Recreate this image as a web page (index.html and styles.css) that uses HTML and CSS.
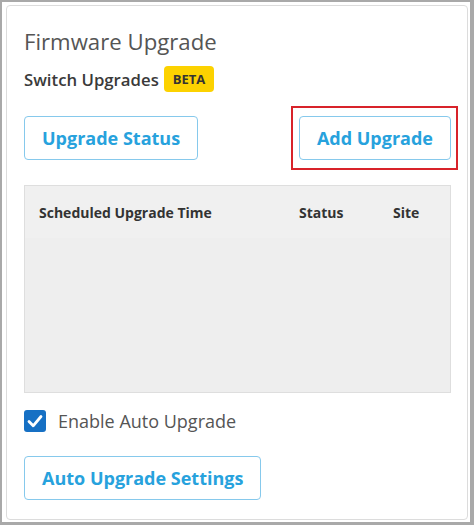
FILE: index.html
```html
<!DOCTYPE html>
<html lang="en">
<head>
<meta charset="utf-8">
<title>Firmware Upgrade</title>
<link rel="stylesheet" href="styles.css">
</head>
<body>
<div class="frame">
  <section class="card">
    <h1 class="title">Firmware Upgrade</h1>
    <div class="subtitle">
      <span class="subtitle-text">Switch Upgrades</span>
      <span class="badge">BETA</span>
    </div>
    <div class="actions">
      <button class="btn">Upgrade Status</button>
      <span class="highlight"><button class="btn">Add Upgrade</button></span>
    </div>
    <div class="table">
      <div class="table-head">
        <span>Scheduled Upgrade Time</span>
        <span>Status</span>
        <span>Site</span>
      </div>
      <div class="table-body"></div>
    </div>
    <label class="check-row">
      <span class="checkbox">
        <svg viewBox="0 0 22 22" width="22" height="22"><path d="M5 11.5 L9.2 15.8 L17 6.5" fill="none" stroke="#fff" stroke-width="2.8" stroke-linecap="round" stroke-linejoin="round"/></svg>
      </span>
      <span class="check-label">Enable Auto Upgrade</span>
    </label>
    <div class="actions">
      <button class="btn">Auto Upgrade Settings</button>
    </div>
  </section>
</div>
</body>
</html>
```
FILE: styles.css
```css
* { box-sizing: border-box; }
html, body { margin: 0; padding: 0; background: #fff; }
body { font-family: "Open Sans", "Noto Sans", sans-serif; }

.frame {
  width: 474px;
  height: 525px;
  border-style: solid;
  border-color: #a9a9a9;
  border-width: 2px 4px 3px 2px;
  padding: 3px 2px 2px 4px;
  background: #fff;
}

.card {
  height: 100%;
  border: 1px solid #dcdcdc;
  border-radius: 4px;
  padding: 21px 16px 0 17px;
  display: flex;
  flex-direction: column;
}

.title {
  margin: 0;
  font-size: 22.2px;
  line-height: 30px;
  font-weight: 400;
  color: #555;
}

.subtitle {
  margin-top: 9px;
  display: flex;
  align-items: center;
  gap: 5px;
  height: 26px;
}
.subtitle-text {
  font-size: 16.75px;
  font-weight: 600;
  color: #3a3a3a;
}
.badge {
  background: #fcd200;
  color: #333;
  font-size: 13px;
  font-weight: 700;
  border-radius: 4px;
  height: 26px;
  line-height: 26px;
  padding: 0 9px;
}

.actions {
  display: flex;
  justify-content: space-between;
  align-items: center;
  margin-top: 24px;
}

.btn {
  font-family: inherit;
  font-size: 18px;
  font-weight: 700;
  color: #27a2dd;
  background: #fff;
  border: 1px solid #86c9ec;
  border-radius: 4px;
  height: 44px;
  padding: 0 17px;
  cursor: pointer;
}

.highlight {
  position: relative;
  display: inline-flex;
}
.highlight::after {
  content: "";
  position: absolute;
  left: -8px;
  right: -7px;
  top: -10px;
  bottom: -10px;
  border: 2px solid #d8232a;
  pointer-events: none;
}

.table {
  margin-top: 25px;
  height: 208px;
  border: 1px solid #dedede;
  background: #efefef;
  display: flex;
  flex-direction: column;
}
.table-head {
  display: grid;
  grid-template-columns: 260px 94px 1fr;
  padding-left: 14px;
  height: 52px;
  align-items: center;
  font-size: 14px;
  font-weight: 700;
  color: #333;
  background: #f0f0f0;
}
.table-body { flex: 1; background: #eeeeee; }

.check-row {
  margin-top: 16px;
  display: flex;
  align-items: center;
  gap: 12px;
  height: 23px;
}
.checkbox {
  width: 22px;
  height: 22px;
  border-radius: 3px;
  background: #1670c4;
  display: inline-flex;
}
.check-label {
  font-size: 18px;
  color: #555;
}

.actions + .actions { margin-top: 24px; }
```
